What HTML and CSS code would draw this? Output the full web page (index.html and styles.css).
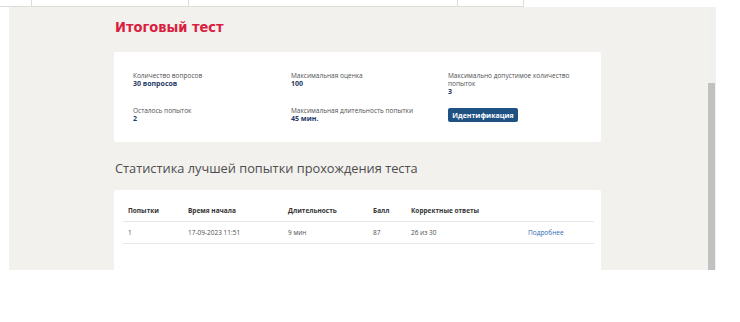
FILE: index.html
```
<!DOCTYPE html>
<html lang="ru">
<head>
    <meta charset="UTF-8">
    <meta name="viewport" content="width=device-width, initial-scale=1.0">
    <title>Итоговый тест</title>
    <link rel="stylesheet" href="styles.css">
</head>
<body>
    <div class="top-strip">
        <div class="strip-cell w1"></div>
        <div class="strip-cell w2"></div>
        <div class="strip-cell w3"></div>
        <div class="strip-cell w4"></div>
    </div>

    <div class="frame">
        <div class="page">
            <h1 class="title">Итоговый тест</h1>

            <div class="card info-card">
                <div class="info-item">
                    <div class="info-label">Количество вопросов</div>
                    <div class="info-value">30 вопросов</div>
                </div>
                <div class="info-item">
                    <div class="info-label">Максимальная оценка</div>
                    <div class="info-value">100</div>
                </div>
                <div class="info-item">
                    <div class="info-label">Максимально допустимое количество<br>попыток</div>
                    <div class="info-value">3</div>
                </div>
                <div class="info-item">
                    <div class="info-label">Осталось попыток</div>
                    <div class="info-value">2</div>
                </div>
                <div class="info-item">
                    <div class="info-label">Максимальная длительность попытки</div>
                    <div class="info-value">45 мин.</div>
                </div>
                <div class="info-item">
                    <button class="ident-btn">Идентификация</button>
                </div>
            </div>

            <h2 class="subtitle">Статистика лучшей попытки прохождения теста</h2>

            <div class="card stats-card">
                <table class="stats-table">
                    <thead>
                        <tr>
                            <th class="c1">Попытки</th>
                            <th class="c2">Время начала</th>
                            <th class="c3">Длительность</th>
                            <th class="c4">Балл</th>
                            <th class="c5">Корректные ответы</th>
                            <th></th>
                        </tr>
                    </thead>
                    <tbody>
                        <tr>
                            <td>1</td>
                            <td>17-09-2023 11:51</td>
                            <td>9 мин</td>
                            <td>87</td>
                            <td>26 из 30</td>
                            <td><a href="#" class="more-link">Подробнее</a></td>
                        </tr>
                    </tbody>
                </table>
            </div>
        </div>

        <div class="scrollbar">
            <div class="scroll-thumb"></div>
        </div>
    </div>
</body>
</html>
```

FILE: styles.css
```
:root {
    --bg-grey: #f2f1ee;
    --accent-red: #d9203f;
    --navy: #1e3a66;
    --btn-blue: #1f5283;
    --text-dark: #333333;
    --text-muted: #4f4f4f;
    --link: #2f6bb0;
    --line: #e8e8e8;
}

* {
    margin: 0;
    padding: 0;
    box-sizing: border-box;
}

body {
    font-family: 'Open Sans', 'Noto Sans', sans-serif;
    background: #ffffff;
    color: var(--text-dark);
}

.top-strip {
    display: flex;
    height: 7px;
}

.strip-cell {
    border-right: 1px solid #dedcd8;
    border-bottom: 1px solid #dedcd8;
}

.w1 { width: 32px; }
.w2 { width: 157px; }
.w3 { width: 269px; }
.w4 { width: 66px; }

.frame {
    display: flex;
    margin-left: 9px;
    width: 707px;
    height: 263px;
    background: var(--bg-grey);
    overflow: hidden;
}

.page {
    flex: 1;
    padding: 11px 0 0 105px;
}

.scrollbar {
    width: 8px;
    display: flex;
    flex-direction: column;
    background: #f0f0f0;
    padding-top: 76px;
}

.scroll-thumb {
    flex: 1;
    width: 7px;
    background: #c1c1c1;
}

.title {
    font-family: 'DejaVu Sans Condensed', 'DejaVu Sans', sans-serif;
    font-size: 14.5px;
    font-weight: 700;
    color: var(--accent-red);
    line-height: 18px;
    margin-bottom: 16px;
    margin-left: 1px;
}

.card {
    width: 487px;
    background: #ffffff;
    border-radius: 2px;
}

.info-card {
    display: grid;
    grid-template-columns: 158px 157px 1fr;
    row-gap: 11px;
    padding: 20px 19px 19px;
}

.info-label {
    font-size: 6.5px;
    line-height: 8px;
    color: var(--text-muted);
}

.info-value {
    font-size: 7px;
    line-height: 8px;
    font-weight: 700;
    color: var(--navy);
}

.ident-btn {
    display: block;
    font-family: 'Open Sans', 'Noto Sans', sans-serif;
    font-size: 7px;
    font-weight: 700;
    color: #ffffff;
    background: var(--btn-blue);
    border: none;
    border-radius: 2px;
    width: 70px;
    height: 14px;
    margin-top: 1px;
}

.subtitle {
    font-size: 12.8px;
    font-weight: 400;
    color: #4d4d4d;
    line-height: 18px;
    margin: 17px 0 13px 1px;
}

.stats-card {
    padding: 14px 7px 40px 9px;
}

.stats-table {
    width: 100%;
    border-collapse: collapse;
    font-size: 6.5px;
}

.stats-table th {
    text-align: left;
    font-weight: 700;
    color: var(--text-dark);
    padding: 2px 5px 6px;
    border-bottom: 1.5px solid var(--line);
}

.stats-table td {
    color: var(--text-muted);
    padding: 6px 5px 6px;
    border-bottom: 1.5px solid var(--line);
}

.c1 { width: 60px; }
.c2 { width: 100px; }
.c3 { width: 85px; }
.c4 { width: 38px; }
.c5 { width: 117px; }

.more-link {
    color: var(--link);
    text-decoration: none;
}
```
